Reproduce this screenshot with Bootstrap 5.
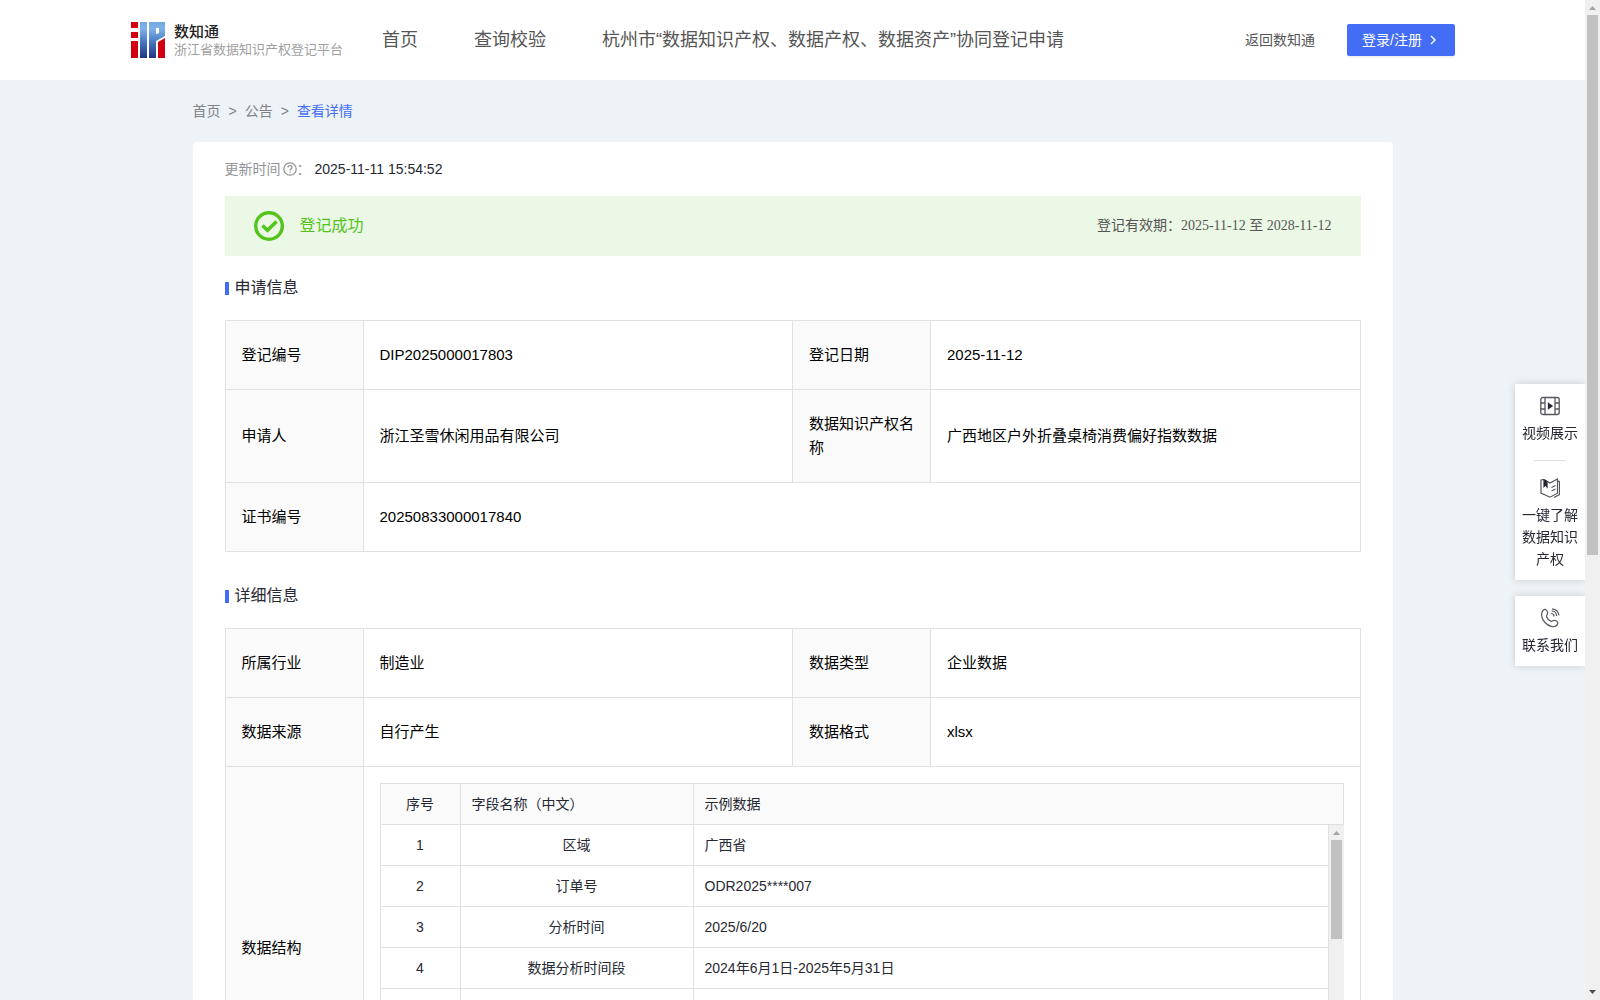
<!DOCTYPE html>
<html lang="zh-CN">
<head>
<meta charset="utf-8">
<meta name="viewport" content="width=device-width, initial-scale=1">
<title>数知通 - 查看详情</title>
<link rel="stylesheet" href="https://cdn.jsdelivr.net/npm/bootstrap@5.3.0/dist/css/bootstrap.min.css">
<style>
  html { scrollbar-width: none; }
  body { background: #eef3f7; color: #262833; font-family: "Liberation Sans", "Noto Sans CJK SC", sans-serif; font-size: 14px; line-height: 22px; padding-right: 15px; }
  a { text-decoration: none; color: inherit; }
  .site-head { height: 80px; background: #fff; padding: 0 130px; }
  .brand-title { font-size: 15px; font-weight: 500; line-height: 20px; color: #222; font-family: "Noto Sans CJK SC", sans-serif; }
  .brand-sub { font-size: 13px; line-height: 18px; color: #a0a0a0; }
  .main-nav { font-size: 18px; gap: 56px; color: #555; margin-left: 39px; }
  .back-link { color: #555; }
  .btn-login { height: 32px; padding: 0 15px; gap: 6px; border: 0; border-radius: 2px; background: #446df6; color: #fff; font-size: 14px; line-height: 22px; box-shadow: 0 2px 0 rgba(0,0,0,.05); }
  .page-wrap { max-width: 1200px; }
  .crumbs { height: 62px; gap: 8px; color: #808288; }
  .crumbs .current { color: #446df6; }
  .sheet { background: #fff; border-radius: 4px; padding: 16px 32px 32px; }
  .muted { color: #929397; }
  .banner { height: 60px; margin-top: 16px; padding: 0 29px; background: #ecf8e6; }
  .banner-state { color: #52c41a; font-size: 16px; }
  .banner-term { color: #555; font-family: "Liberation Serif", "Noto Sans CJK SC", serif; }
  .sect { display: flex; align-items: center; gap: 6px; font-size: 16px; line-height: 24px; margin: 0; font-weight: 400; padding: 20px 0; }
  .sect::before { content: ""; width: 4px; height: 13px; background: #446df6; }
  .sect-next { padding-top: 32px; }
  .info { width: 100%; table-layout: fixed; border-collapse: collapse; font-size: 15px; line-height: 24px; color: #000; }
  .info > tbody > tr > th, .info > tbody > tr > td { border: 1px solid #e1e1e1; padding: 22px 16px; vertical-align: middle; font-weight: 400; }
  .info > tbody > tr > th { background: #fafafa; }
  .info > tbody > tr > td.nest { padding: 16px; }
  .w-label { width: 138px; }
  .fields { width: 100%; table-layout: fixed; border-collapse: separate; border-spacing: 0; font-size: 14px; line-height: 22px; color: #262833; }
  .fields th, .fields td { height: 41px; padding: 9px 11px; border: solid #e1e1e1; border-width: 0 1px 1px 0; font-weight: 400; }
  .fields th { background: #fafafa; border-top-width: 1px; height: 42px; }
  .fields tr > :first-child { border-left-width: 1px; text-align: center; }
  .fields td:nth-child(2) { text-align: center; }
  .c-no { width: 81px; }
  .c-name { width: 233px; }
  .fields-body { height: 287px; }
  .fields-view { overflow: hidden; }
  .bar { display: flex; flex-direction: column; align-items: center; flex: none; width: 15px; background: #f0f0f0; }
  .bar-thumb { width: 11px; height: 99px; background: #c1c1c1; }
  .bar svg { flex: none; }
  .page-bar { position: fixed; top: 0; right: 0; bottom: 0; z-index: 20; }
  .page-bar .bar-thumb { height: 54%; }
  .side { position: fixed; right: 15px; top: 384px; width: 70px; z-index: 10; }
  .side-box { background: #fff; box-shadow: 0 0 8px rgba(0,0,0,.16); padding: 12px 0 10px; }
  .side-item { display: flex; flex-direction: column; align-items: center; gap: 6px; padding: 0 7px; text-align: center; }
  .side-sep { width: 32px; height: 1px; background: #e1e1e1; margin: 16px auto 17px; }
</style>
</head>
<body>
<header class="site-head d-flex align-items-center">
  <a href="#" class="d-flex align-items-center gap-2">
    <svg width="36" height="38" viewBox="0 0 36 38" aria-hidden="true">
      <defs><linearGradient id="lg" x1="0" y1="0" x2="0" y2="38" gradientUnits="userSpaceOnUse"><stop offset="0" stop-color="#6ea5e0"/><stop offset=".2" stop-color="#7fb2e8"/><stop offset=".55" stop-color="#4a78c0"/><stop offset="1" stop-color="#1f2f80"/></linearGradient></defs>
      <path fill="#d30011" d="M1 1h7v6H1zM1 11h7v6H1zM1 20h7v17H1zM28 21l7-4v20h-7z"/>
      <path fill="url(#lg)" d="M10 1h7v36h-7zM19 1h16v14l-9 5v17h-7z"/>
      <path fill="#fff" d="M26 7h3v5l-3 1z"/>
    </svg>
    <span><span class="brand-title d-block">数知通</span><span class="brand-sub d-block">浙江省数据知识产权登记平台</span></span>
  </a>
  <nav class="main-nav d-flex">
    <a href="#">首页</a><a href="#">查询校验</a><a href="#">杭州市“数据知识产权、数据产权、数据资产”协同登记申请</a>
  </nav>
  <div class="ms-auto d-flex align-items-center">
    <a href="#" class="back-link me-2 pe-4">返回数知通</a>
    <button type="button" class="btn-login d-flex align-items-center">登录/注册
      <svg width="12" height="12" viewBox="0 0 12 12" fill="none" stroke="#fff" stroke-width="1.4" aria-hidden="true"><path d="M3 2l4 4-4 4"/></svg>
    </button>
  </div>
</header>

<main class="page-wrap mx-auto">
  <nav class="crumbs d-flex align-items-center" aria-label="breadcrumb">
    <a href="#">首页</a><span>&gt;</span><a href="#">公告</a><span>&gt;</span><a href="#" class="current">查看详情</a>
  </nav>
  <div class="sheet">
    <div class="d-flex align-items-center">
      <span class="muted">更新时间</span>
      <svg class="ms-px" width="16" height="16" viewBox="0 0 16 16" fill="none" stroke="#929397" stroke-width="1.3" aria-hidden="true"><circle cx="9" cy="8" r="6.200"/><path d="M7 6.600c0-2.600 4-2.600 4 0 0 1.300-2 1.400-2 2.800M9 10.600v1.200"/></svg>
      <span class="muted me-1">：</span>
      <span>2025-11-11 15:54:52</span>
    </div>
    <div class="banner d-flex align-items-center justify-content-between">
      <div class="banner-state d-flex align-items-center">
        <svg class="me-3" width="30" height="30" viewBox="0 0 30 30" fill="none" stroke="#52c41a" aria-hidden="true"><circle cx="15" cy="15" r="13.300" stroke-width="3.400"/><path d="M8.500 14.500l5 4.800 9-8.800" stroke-width="3.600"/></svg>
        登记成功
      </div>
      <div class="banner-term">登记有效期：2025-11-12 至 2028-11-12</div>
    </div>

    <h2 class="sect">申请信息</h2>
    <table class="info">
      <colgroup><col class="w-label"><col><col class="w-label"><col></colgroup>
      <tbody>
        <tr><th scope="row">登记编号</th><td>DIP2025000017803</td><th scope="row">登记日期</th><td>2025-11-12</td></tr>
        <tr><th scope="row">申请人</th><td>浙江圣雪休闲用品有限公司</td><th scope="row">数据知识产权名称</th><td>广西地区户外折叠桌椅消费偏好指数数据</td></tr>
        <tr><th scope="row">证书编号</th><td colspan="3">20250833000017840</td></tr>
      </tbody>
    </table>

    <h2 class="sect sect-next">详细信息</h2>
    <table class="info">
      <colgroup><col class="w-label"><col><col class="w-label"><col></colgroup>
      <tbody>
        <tr><th scope="row">所属行业</th><td>制造业</td><th scope="row">数据类型</th><td>企业数据</td></tr>
        <tr><th scope="row">数据来源</th><td>自行产生</td><th scope="row">数据格式</th><td>xlsx</td></tr>
        <tr><th scope="row">数据结构</th><td colspan="3" class="nest">
          <table class="fields">
            <colgroup><col class="c-no"><col class="c-name"><col></colgroup>
            <thead><tr><th scope="col">序号</th><th scope="col">字段名称（中文）</th><th scope="col">示例数据</th></tr></thead>
          </table>
          <div class="fields-body d-flex">
            <div class="fields-view flex-grow-1">
              <table class="fields">
                <colgroup><col class="c-no"><col class="c-name"><col></colgroup>
                <tbody>
                  <tr><td>1</td><td>区域</td><td>广西省</td></tr>
                  <tr><td>2</td><td>订单号</td><td>ODR2025****007</td></tr>
                  <tr><td>3</td><td>分析时间</td><td>2025/6/20</td></tr>
                  <tr><td>4</td><td>数据分析时间段</td><td>2024年6月1日-2025年5月31日</td></tr>
                  <tr><td></td><td></td><td></td></tr>
                  <tr><td></td><td></td><td></td></tr>
                  <tr><td></td><td></td><td></td></tr>
                </tbody>
              </table>
            </div>
            <div class="bar" aria-hidden="true">
              <svg width="15" height="15" viewBox="0 0 15 15"><path fill="#a3a3a3" d="M4 10l3.500-4 3.500 4z"/></svg>
              <div class="bar-thumb"></div>
            </div>
          </div>
        </td></tr>
      </tbody>
    </table>
  </div>
</main>

<aside class="side d-grid gap-3">
  <div class="side-box">
    <a href="#" class="side-item">
      <svg width="20" height="20" viewBox="0 0 20 20" fill="none" stroke="#55565f" stroke-width="1.300" aria-hidden="true"><rect x=".8" y="1.500" width="18.400" height="17" rx="2"/><path d="M5 1.500v17M15 1.500v17M1 7h4M1 13h4M15 7h4M15 13h4"/><path d="M8.500 7.500v5l3.500-2.500z" fill="#262833" stroke="#262833"/></svg>
      视频展示</a>
    <div class="side-sep"></div>
    <a href="#" class="side-item">
      <svg width="20" height="20" viewBox="0 0 20 20" fill="none" stroke="#55565f" stroke-width="1.200" aria-hidden="true"><path d="M4 1.500L1 2v13l9 4.200 7.500-4V1L10 5 4 1.500M17.500 3l2 .6v12.900l-5.500 3M11.500 9.500l4-2M11.500 13l4-2"/><path d="M4 2v6.500l1.500-1.500L7 9V3.500z" fill="#262833" stroke="#262833"/></svg>
      一键了解数据知识产权</a>
  </div>
  <div class="side-box">
    <a href="#" class="side-item">
      <svg width="20" height="20" viewBox="0 0 20 20" fill="none" stroke="#55565f" stroke-width="1.200" aria-hidden="true"><path d="M3 2.500c2-2 3.500-1 4.500 1.500 1 2.200-1.500 3-1 4.500.6 2 2.500 4 4.500 4.800 1.500.5 2.500-1.800 4.500-.8 2.500 1.200 3 2.500 1.500 4.500-3 3.500-8.500 1.200-12-2.500C1.500 11 .5 5.500 3 2.500zM11 5.500c2 0 3 1.500 3 3M11.500 3c3 0 5 2 5 5M12 .8c4 .4 6.500 3 7 6.500"/></svg>
      联系我们</a>
  </div>
</aside>
<div class="bar page-bar" aria-hidden="true">
  <svg width="15" height="15" viewBox="0 0 15 15"><path fill="#a3a3a3" d="M4 10l3.500-4 3.500 4z"/></svg>
  <div class="bar-thumb"></div>
  <svg class="mt-auto" width="15" height="15" viewBox="0 0 15 15"><path fill="#505050" d="M4 5l3.500 4L11 5z"/></svg>
</div>
<script src="https://cdn.jsdelivr.net/npm/bootstrap@5.3.0/dist/js/bootstrap.bundle.min.js"></script>
</body>
</html>
